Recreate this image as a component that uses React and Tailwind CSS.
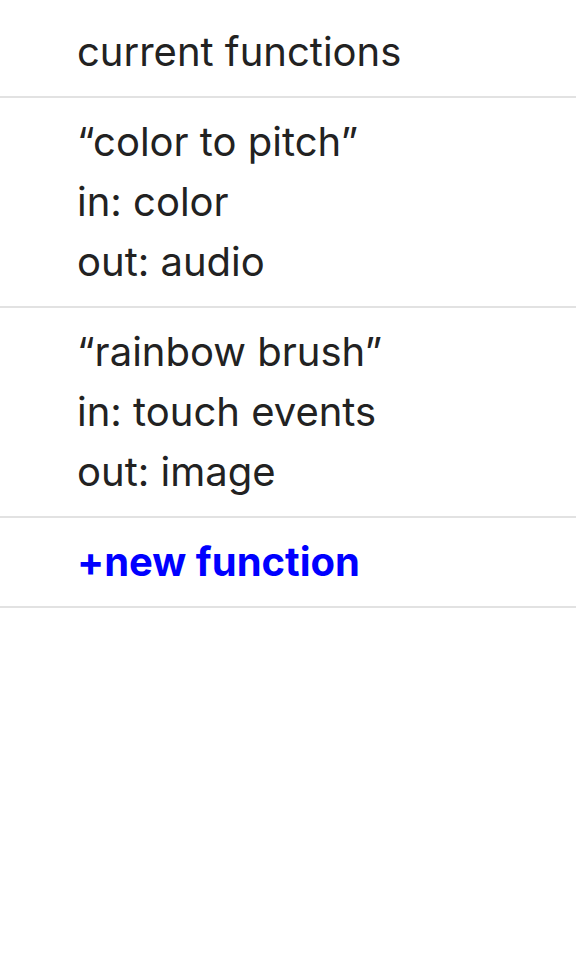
export default function App() {
  const font = { fontFamily: "Inter, 'Noto Sans', sans-serif" };
  return (
    <div className="w-[576px] h-[972px] bg-white text-[#222222] text-[40px] leading-[60px]" style={font}>
      <div className="pl-[77px] pt-[22px] pb-[14px] border-b-2 border-[#e2e2e2]">current functions</div>
      <div className="pl-[77px] py-[14px] border-b-2 border-[#e2e2e2] flex flex-col">
        <span>“color to pitch”</span>
        <span>in: color</span>
        <span>out: audio</span>
      </div>
      <div className="pl-[77px] py-[14px] border-b-2 border-[#e2e2e2] flex flex-col">
        <span>“rainbow brush”</span>
        <span>in: touch events</span>
        <span>out: image</span>
      </div>
      <div className="pl-[77px] py-[14px] border-b-2 border-[#e2e2e2] font-bold text-[#0000ff]">+new function</div>
    </div>
  );
}
